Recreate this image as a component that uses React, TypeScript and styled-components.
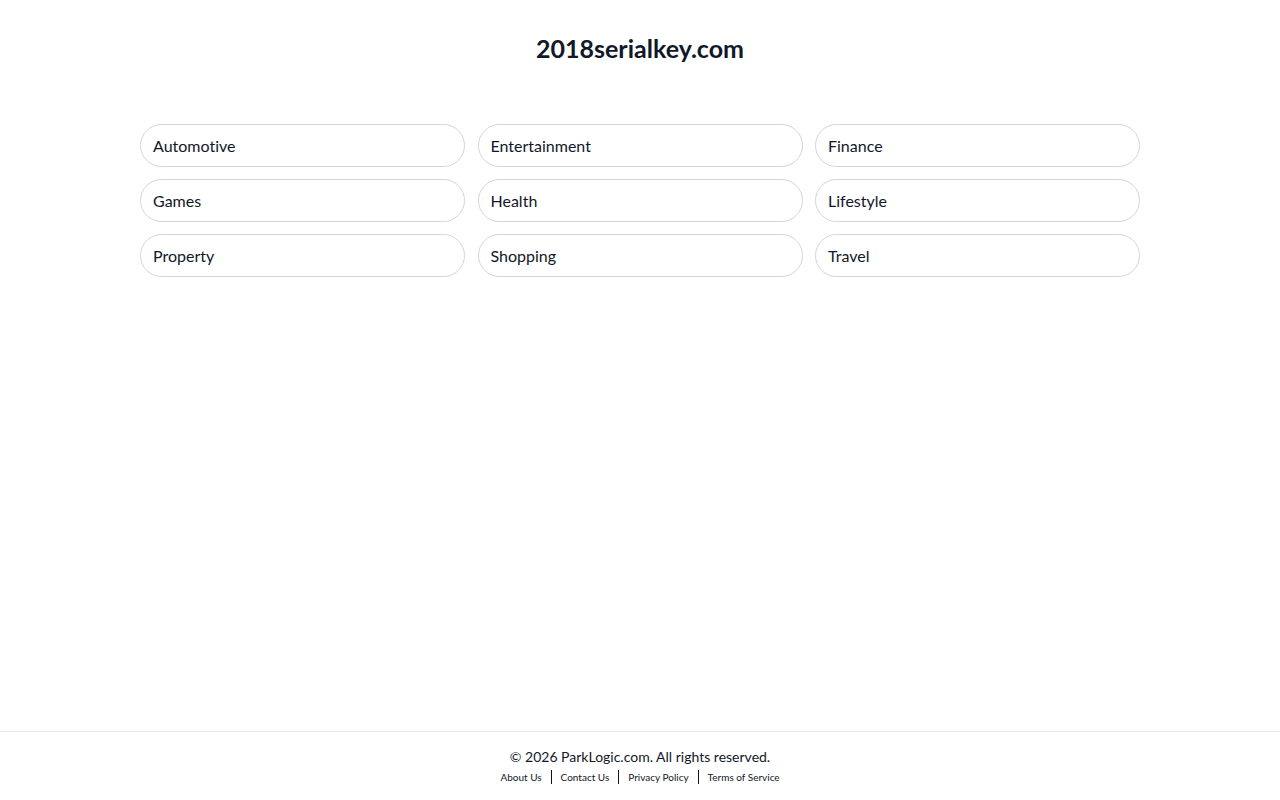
import React from "react";
import styled, { createGlobalStyle } from "styled-components";

const Global = createGlobalStyle`
  html, body { margin: 0; padding: 0; background: #fff; }
  body {
    font-family: "Lato", "Noto Sans", "Liberation Sans", sans-serif;
    color: #111827;
    font-variant-ligatures: none;
  }
  #root { min-height: 100vh; }
`;

const Page = styled.div`
  min-height: 100vh;
  display: flex;
  flex-direction: column;
`;

const Main = styled.main`
  flex: 1;
  display: flex;
  flex-direction: column;
  align-items: center;
  padding-top: 31px;
`;

const Title = styled.h1`
  margin: 0;
  font-size: 25px;
  line-height: 34px;
  font-weight: 700;
  color: #111827;
`;

const Grid = styled.div`
  margin-top: 59px;
  width: 1000px;
  display: grid;
  grid-template-columns: repeat(3, 1fr);
  column-gap: 12.5px;
  row-gap: 12px;
`;

const Pill = styled.a`
  display: flex;
  align-items: center;
  height: 43px;
  box-sizing: border-box;
  padding: 0 12px;
  border: 1px solid #d1d5db;
  border-radius: 9999px;
  font-size: 16px;
  color: #111827;
  text-decoration: none;
`;

const Footer = styled.footer`
  border-top: 1px solid #e5e7eb;
  padding: 15px 0 16px;
  display: flex;
  flex-direction: column;
  align-items: center;
`;

const Copy = styled.div`
  font-size: 14px;
  line-height: 20px;
  color: #111827;
`;

const Links = styled.nav`
  display: flex;
  align-items: center;
  margin-top: 3px;
`;

const FootLink = styled.a<{ $first?: boolean }>`
  font-size: 10px;
  line-height: 14px;
  color: #111827;
  text-decoration: none;
  padding: 0 9px;
  border-left: ${(p) => (p.$first ? "none" : "1px solid #111")};
`;

const categories = [
  "Automotive",
  "Entertainment",
  "Finance",
  "Games",
  "Health",
  "Lifestyle",
  "Property",
  "Shopping",
  "Travel",
];

const links = ["About Us", "Contact Us", "Privacy Policy", "Terms of Service"];

export default function App() {
  return (
    <Page>
      <Global />
      <Main>
        <Title>2018serialkey.com</Title>
        <Grid>
          {categories.map((c) => (
            <Pill key={c} href="#">
              {c}
            </Pill>
          ))}
        </Grid>
      </Main>
      <Footer>
        <Copy>© 2026 ParkLogic.com. All rights reserved.</Copy>
        <Links>
          {links.map((l, i) => (
            <FootLink key={l} href="#" $first={i === 0}>
              {l}
            </FootLink>
          ))}
        </Links>
      </Footer>
    </Page>
  );
}
